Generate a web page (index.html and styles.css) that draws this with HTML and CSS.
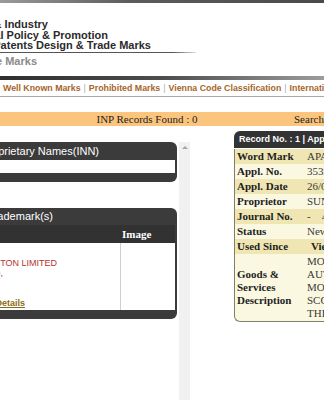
FILE: index.html
```html
<!DOCTYPE html>
<html lang="en">
<head>
    <meta charset="UTF-8">
    <meta name="viewport" content="width=device-width, initial-scale=1.0">
    <title>Trade Marks - INN Search</title>
    <link rel="stylesheet" href="styles.css">
</head>
<body>
    <div class="top-strip"></div>

    <header class="masthead">
        <div class="masthead-line line-1"><span>Ministry of Commerce &amp; Industry</span></div>
        <div class="masthead-line line-2"><span>Department of Industrial Policy &amp; Promotion</span></div>
        <div class="masthead-line line-3"><span>Office of the Controller General of Patents Design &amp; Trade Marks</span></div>
        <div class="masthead-rule"></div>
        <div class="masthead-line line-4"><span>Trade Marks</span></div>
    </header>

    <div class="dark-strip"></div>

    <nav class="menu">
        <a href="#">Well Known Marks</a>
        <span class="sep">|</span>
        <a href="#">Prohibited Marks</a>
        <span class="sep">|</span>
        <a href="#">Vienna Code Classification</a>
        <span class="sep">|</span>
        <a href="#">International Non-Proprietary Names</a>
    </nav>

    <div class="count-bar">
        <span class="count-text">INP Records Found : 0</span>
        <span class="count-search">Search Results</span>
    </div>

    <main class="content">
        <div class="left-col">
            <div class="panels">
                <!-- INN list -->
                <section class="panel">
                    <div class="panel-head clip inn-title"><span>International Non-Proprietary Names(INN)</span></div>
                    <div class="panel-body"></div>
                </section>

                <!-- Trademarks list -->
                <section class="panel panel-tm">
                    <div class="panel-head clip tm-title"><span>Trademark(s)</span></div>
                    <div class="tm-cols">
                        <div class="tm-col-main"></div>
                        <div class="tm-col-image">Image</div>
                    </div>
                    <div class="tm-row">
                        <div class="tm-cell-main">
                            <div class="clip owner"><span>SUNDERTON LIMITED</span></div>
                            <div class="clip owner-extra"><span>(APPLICANT),</span></div>
                            <a href="#" class="clip details"><span>View Details</span></a>
                        </div>
                        <div class="tm-cell-image"></div>
                    </div>
                </section>
            </div>
            <div class="scrollbar"></div>
        </div>

        <section class="record">
            <div class="record-head">Record No. : 1 | Application Details</div>
            <div class="record-body">
                <table class="record-table">
                    <colgroup>
                        <col class="col-label">
                        <col>
                    </colgroup>
                    <tr><td class="label">Word Mark</td><td>APATONIX</td></tr>
                    <tr><td class="label">Appl. No.</td><td>3539127</td></tr>
                    <tr><td class="label">Appl. Date</td><td>26/05/2017</td></tr>
                    <tr><td class="label">Proprietor</td><td>SUNDERTON LIMITED</td></tr>
                    <tr><td class="label">Journal No.</td><td>-&nbsp;&nbsp;&nbsp;&nbsp;4</td></tr>
                    <tr><td class="label">Status</td><td>New Application</td></tr>
                    <tr><td class="label">Used Since</td><td class="strong">Vienna Code</td></tr>
                    <tr class="goods">
                        <td class="label">Goods &amp;<br>Services<br>Description</td>
                        <td>MONOCLONAL ANTIBODIES FOR HUMAN USE<br>AUTOIMMUNE DISEASE PREPARATIONS<br>MODULATORS OF IMMUNE RESPONSE<br>SCORED TABLETS AND CAPSULES<br>THERAPEUTIC SUBSTANCES</td>
                    </tr>
                </table>
            </div>
        </section>
    </main>
</body>
</html>
```

FILE: styles.css
```css
* {
    box-sizing: border-box;
    margin: 0;
    padding: 0;
}

body {
    font-family: 'Liberation Sans', Arial, sans-serif;
    background: #fff;
    color: #222;
    width: 324px;
    height: 400px;
    overflow: hidden;
}

/* text that runs off the left edge: the end is pinned, the start overflows */
.clip {
    display: flex;
    justify-content: flex-end;
    white-space: nowrap;
}

.top-strip {
    height: 3px;
    background: linear-gradient(to right, #9a9a9a, #5c5c5c 40%, #4a4a4a);
}

/* Header */
.masthead {
    height: 73px;
    padding-top: 16px;
}

.masthead-line {
    display: flex;
    justify-content: flex-end;
    white-space: nowrap;
    font-size: 11px;
    line-height: 10.5px;
    font-weight: 700;
    color: #2b2b2b;
}

.line-1 { width: 48px; }
.line-2 { width: 108px; }
.line-3 { width: 151px; }

.masthead-rule {
    width: 196px;
    height: 1px;
    margin: 1.5px 0 2.5px;
    background: linear-gradient(to right, #555 88%, #ddd);
}

.line-4 {
    width: 37px;
    line-height: 11px;
    color: #8a8a8a;
}

.dark-strip {
    height: 4px;
    background: linear-gradient(to right, #2f2f2f, #4d4d4d 50%, #9c9c9c);
}

/* Menu */
.menu {
    display: flex;
    height: 17px;
    padding-left: 3px;
    border-bottom: 1px solid #a8a8a8;
    font-size: 8.8px;
    font-weight: 700;
    line-height: 16px;
    white-space: nowrap;
    overflow: hidden;
}

.menu a {
    color: #a5662b;
    text-decoration: none;
    flex: none;
}

.menu .sep {
    margin: 0 3px;
    color: #9fb0c2;
    font-weight: 400;
}

/* Records found bar */
.count-bar {
    display: flex;
    height: 14px;
    margin-top: 15px;
    background: #fcc57d;
    font-family: 'Liberation Serif', 'Times New Roman', serif;
    font-size: 11px;
    line-height: 14px;
    color: #222;
    white-space: nowrap;
    overflow: hidden;
}

.count-text {
    flex: none;
    width: 294px;
    text-align: center;
}

.count-search {
    flex: none;
}

/* Main area */
.content {
    display: flex;
    align-items: flex-start;
}

.left-col {
    display: flex;
    flex: none;
    width: 190px;
    margin-top: 16px;
}

.panels {
    width: 177px;
}

.scrollbar {
    width: 11px;
    height: 260px;
    margin-left: 2px;
    background: #f1f1f1;
}

.scrollbar::before {
    content: '';
    display: block;
    width: 0;
    height: 0;
    margin: 4px auto 0;
    border-left: 3px solid transparent;
    border-right: 3px solid transparent;
    border-bottom: 3px solid #a6a6a6;
}

.panel {
    background: #3b3b3b;
    border-radius: 0 6px 6px 0;
    padding: 0 2px 9px 0;
    color: #fff;
}

.panel-head {
    height: 18px;
    font-size: 11px;
    line-height: 18px;
}

.inn-title { width: 99px; }
.tm-title { width: 53px; }

.panel-body {
    height: 13px;
    background: #fff;
}

.panel-tm {
    margin-top: 26px;
}

.panel-tm .panel-head {
    height: 17px;
    line-height: 17px;
}

.tm-cols {
    display: flex;
    height: 18px;
    background: #323232;
}

.tm-col-main {
    width: 120px;
}

.tm-col-image {
    flex: 1;
    padding-left: 2px;
    font-family: 'Liberation Serif', 'Times New Roman', serif;
    font-size: 11px;
    font-weight: 700;
    line-height: 18px;
}

.tm-row {
    display: flex;
    height: 67px;
    background: #fff;
}

.tm-cell-main {
    width: 121px;
    padding-top: 15px;
    border-right: 1px solid #cfcfcf;
    font-size: 9px;
    line-height: 10px;
    color: #b8322e;
}

.owner { width: 57px; }
.owner-extra { width: 3px; }

.details {
    width: 25px;
    margin-top: 20px;
    font-weight: 700;
    color: #8c6a16;
    text-decoration: underline;
}

.tm-cell-image {
    flex: 1;
}

/* Record details */
.record {
    flex: none;
    width: 260px;
    margin-top: 5px;
    margin-left: 44px;
}

.record-head {
    height: 17px;
    padding-left: 5px;
    background: #333;
    border-radius: 6px 0 0 0;
    color: #fff;
    font-size: 9px;
    font-weight: 700;
    line-height: 17px;
    white-space: nowrap;
}

.record-body {
    margin-top: 1px;
    border: 1px solid #7f7f6a;
    border-top: none;
    border-right: none;
    border-radius: 0 0 0 6px;
    background: #fbf8e1;
    overflow: hidden;
}

.record-table {
    width: 100%;
    table-layout: fixed;
    border-collapse: collapse;
    font-family: 'Liberation Serif', 'Times New Roman', serif;
    font-size: 11px;
    line-height: 13px;
    color: #3a3a3a;
}

.col-label {
    width: 70px;
}

.record-table td {
    padding: 1px 2px;
    white-space: nowrap;
    vertical-align: middle;
    overflow: hidden;
}

.record-table tr:nth-child(odd) td {
    background: #efe6b4;
}

.record-table .label {
    font-weight: 700;
    color: #1e1e1e;
}

.record-table .strong {
    padding-left: 6px;
    font-weight: 700;
    color: #1e1e1e;
}
```
